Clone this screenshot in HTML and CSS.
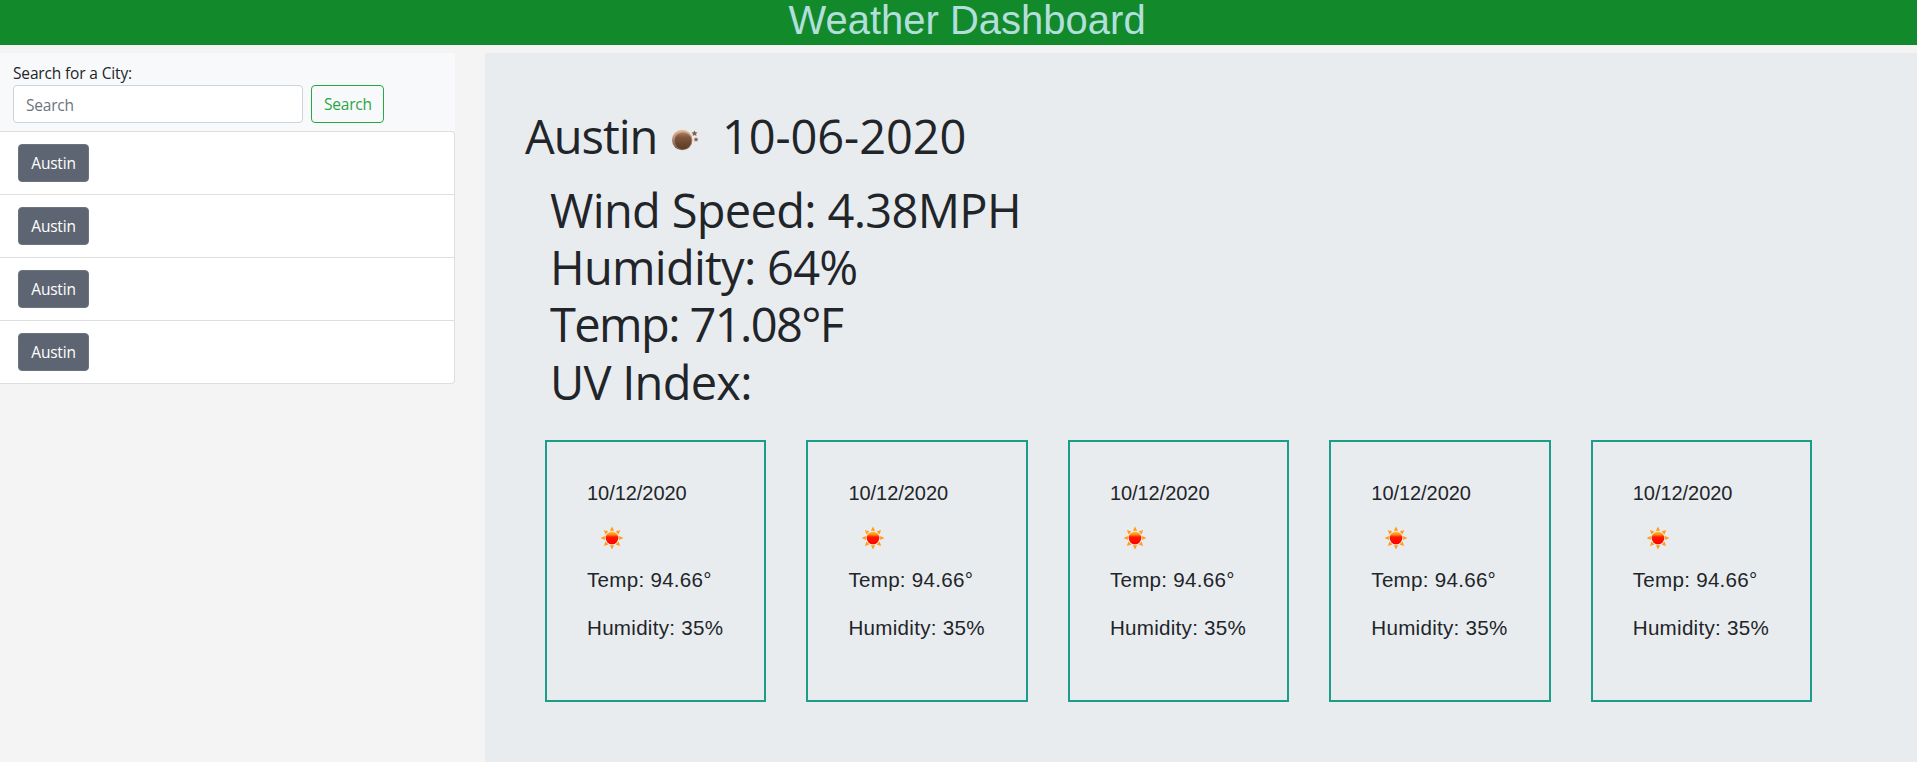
FILE: index.html
```html
<!DOCTYPE html>
<html lang="en">
<head>
<meta charset="utf-8">
<title>Weather Dashboard</title>
<link rel="stylesheet" href="styles.css">
</head>
<body>
<svg width="0" height="0" class="defs" aria-hidden="true">
  <defs>
    <linearGradient id="sunFill" x1="0" y1="0" x2="0" y2="1">
      <stop offset="0" stop-color="#ffc040"/><stop offset=".25" stop-color="#f88a10"/><stop offset=".42" stop-color="#ff1800"/><stop offset="1" stop-color="#f00"/>
    </linearGradient>
    <linearGradient id="moonFill" x1="0" y1="0" x2="0" y2="1">
      <stop offset="0" stop-color="#b08468"/><stop offset=".3" stop-color="#80573c"/><stop offset="1" stop-color="#593a26"/>
    </linearGradient>
    <linearGradient id="moonRim" x1="0" y1="0" x2="0" y2="1">
      <stop offset="0" stop-color="#e8bda0"/><stop offset="1" stop-color="#684631"/>
    </linearGradient>
    <symbol id="sun" viewBox="-12 -12 24 24">
      <g fill="#ff9c18">
        <path id="ray" d="M0-11.4L2.1-7.2H-2.1Z"/>
        <use href="#ray" transform="rotate(45)"/><use href="#ray" transform="rotate(90)"/>
        <use href="#ray" transform="rotate(135)"/><use href="#ray" transform="rotate(180)"/>
        <use href="#ray" transform="rotate(225)"/><use href="#ray" transform="rotate(270)"/>
        <use href="#ray" transform="rotate(315)"/>
      </g>
      <circle r="7" fill="#fbe6c8"/>
      <circle r="6.3" fill="url(#sunFill)"/>
    </symbol>
  </defs>
</svg>
<header class="header"><h1 class="header-title">Weather Dashboard</h1></header>
<div class="layout">
  <aside class="sidebar">
    <form class="search">
      <label class="search-label" for="city">Search for a City:</label>
      <div class="search-row">
        <input class="search-input" id="city" type="text" placeholder="Search">
        <button class="search-button" type="button">Search</button>
      </div>
    </form>
    <ul class="history">
      <li class="history-item"><button class="city-button">Austin</button></li>
      <li class="history-item"><button class="city-button">Austin</button></li>
      <li class="history-item"><button class="city-button">Austin</button></li>
      <li class="history-item"><button class="city-button">Austin</button></li>
    </ul>
  </aside>
  <main class="main">
    <h2 class="city"><span class="city-name">Austin</span><svg class="moon" width="28" height="22" viewBox="0 0 28 22">
      <circle cx="11.2" cy="11" r="10.2" fill="url(#moonRim)"/>
      <circle cx="12" cy="11.8" r="8.8" fill="url(#moonFill)" stroke="#d9b49c" stroke-opacity=".4" stroke-width=".8"/>
      <path d="M23.5 1.3l.9 1.9 2.1.2-1.5 1.5.5 2.1-2-1.1-2 1.1.5-2.1-1.5-1.5 2.1-.2ZM25 7.9l.7 1.6 1.8.2-1.3 1.2.4 1.8-1.6-.9-1.6.9.4-1.8-1.3-1.2 1.8-.2Z" fill="#896049"/>
    </svg><span class="city-date">10-06-2020</span></h2>
    <div class="stats">
      <p class="stat stat-wind">Wind Speed: 4.38MPH</p>
      <p class="stat stat-humidity">Humidity: 64%</p>
      <p class="stat stat-temp">Temp: 71.08°F</p>
      <p class="stat stat-uv">UV Index:</p>
    </div>
    <div class="forecast">
      <section class="card"><p class="card-date">10/12/2020</p><svg class="sun" width="24" height="24"><use href="#sun"/></svg><p class="card-text">Temp: 94.66°</p><p class="card-text">Humidity: 35%</p></section>
      <section class="card"><p class="card-date">10/12/2020</p><svg class="sun" width="24" height="24"><use href="#sun"/></svg><p class="card-text">Temp: 94.66°</p><p class="card-text">Humidity: 35%</p></section>
      <section class="card"><p class="card-date">10/12/2020</p><svg class="sun" width="24" height="24"><use href="#sun"/></svg><p class="card-text">Temp: 94.66°</p><p class="card-text">Humidity: 35%</p></section>
      <section class="card"><p class="card-date">10/12/2020</p><svg class="sun" width="24" height="24"><use href="#sun"/></svg><p class="card-text">Temp: 94.66°</p><p class="card-text">Humidity: 35%</p></section>
      <section class="card"><p class="card-date">10/12/2020</p><svg class="sun" width="24" height="24"><use href="#sun"/></svg><p class="card-text">Temp: 94.66°</p><p class="card-text">Humidity: 35%</p></section>
    </div>
  </main>
</div>
</body>
</html>
```
FILE: styles.css
```css
* { box-sizing: border-box; }
body {
  margin: 0;
  height: 762px;
  overflow: hidden;
  display: flex;
  flex-direction: column;
  background: #f4f4f4;
  color: #212529;
  font: 400 15.5px/24px "Open Sans", "Noto Sans", sans-serif;
}
.defs { position: absolute; }
h1, h2, p, ul { margin: 0; padding: 0; font-weight: 400; }
.header { height: 45px; background: #128a2b; padding-left: 17px; }
.header-title {
  color: #b2dfdb;
  text-align: center;
  font: 400 40px/40px "Liberation Sans", Arial, sans-serif;
}
.layout { flex: 1; display: flex; gap: 30px; padding-top: 8px; }
.sidebar { width: 455px; }
.search { height: 78px; padding: 8px 13px; background: #f8f9fa; }
.search-label { display: block; letter-spacing: -0.15px; }
.search-row { display: flex; gap: 8px; }
.search-input, .search-button, .city-button {
  height: 38px;
  border-radius: 4px;
  font: inherit;
  letter-spacing: -0.2px;
  padding: 0 12px;
}
.search-input { width: 290px; padding-top: 2px; border: 1px solid #ced4da; background: #fff; }
.search-input::placeholder { color: #6c757d; }
.search-button { width: 73px; border: 1px solid #28a745; color: #28a745; background: transparent; }
.history {
  list-style: none;
  border: 1px solid #dfdfdf;
  border-left: 0;
  border-radius: 0 4px 4px 0;
  background: #fff;
}
.history-item { height: 63px; padding: 12px 18px; border-bottom: 1px solid #dfdfdf; }
.history-item:last-child { height: 62px; border-bottom: 0; }
.city-button { width: 71px; border: 1px solid #6c757d; background: #5e6572; color: #fff; }
.main { flex: 1; background: #e9ecef; padding: 55px 0 0 40px; }
.city { display: flex; align-items: center; height: 58px; font-size: 47px; }
.city-name { width: 146px; }
.moon { width: 28px; margin: 5px 23px 0 0; }
.stats { padding: 16px 0 0 25px; }
.city-name, .city-date, .stat {
  letter-spacing: -1px;
  white-space: nowrap;
  line-height: 57.2px;
}
.stat { font-size: 47px; height: 57.2px; }
.city .city-date { letter-spacing: -0.1px; }
.stats .stat-wind { letter-spacing: -0.68px; }
.stats .stat-humidity { letter-spacing: -0.73px; }
.stats .stat-temp { letter-spacing: -1.6px; }
.stats .stat-uv { letter-spacing: -0.75px; }
.forecast { display: flex; gap: 40px; padding: 29px 0 0 20px; }
.card {
  width: 221.45px;
  height: 262px;
  padding: 36px 40px 40px;
  border: 2px solid #1b9d88;
  font: 20px/30px "Liberation Sans", Arial, sans-serif;
  white-space: nowrap;
}
.card-date { letter-spacing: -0.05px; }
.card-text { margin-bottom: 18px; font-size: 20.6px; letter-spacing: 0.27px; }
.sun { display: block; margin: 18px 0 15px 13px; }
```
